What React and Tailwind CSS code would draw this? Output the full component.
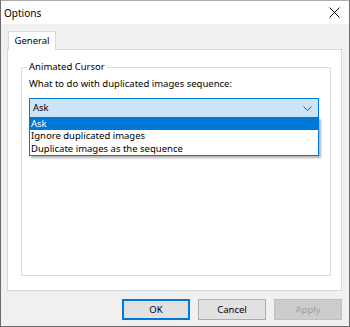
import React from "react";

export default function App() {
  const font = { fontFamily: '"Noto Sans", "Segoe UI", sans-serif' };
  return (
    <div
      className="w-[350px] h-[327px] bg-[#f0f0f0] border-x border-b border-[#6b6b6b] border-t border-t-[#aaaaaa] flex flex-col text-[9.5px] text-black overflow-hidden"
      style={font}
    >
      {/* Title bar */}
      <div className="h-[23px] bg-white flex items-center justify-between shrink-0">
        <span className="pl-[3px] leading-none text-[10px]">Options</span>
        <svg width="11" height="11" viewBox="0 0 11 11" className="mr-[9px]">
          <path d="M0.5 0.5 L10.5 10.5 M10.5 0.5 L0.5 10.5" stroke="#111" strokeWidth="1" />
        </svg>
      </div>

      {/* Body */}
      <div className="flex-1 flex flex-col pl-[6px] pr-[7px] pt-[7px]">
        {/* Tab strip */}
        <div className="flex pl-[1px] h-[19px] relative z-10">
          <div className="w-[48px] h-[19px] bg-white border-x border-t border-[#d9d9d9] flex items-center justify-center leading-none">
            General
          </div>
        </div>
        {/* Tab panel */}
        <div className="h-[242px] -mt-[1px] bg-white border border-[#d9d9d9] pl-[13px] pr-[10px] pt-[17px] pb-[14px] flex flex-col">
          <div className="relative flex-1 border border-[#dcdcdc] flex flex-col px-[7px]">
            <span className="absolute -top-[8px] left-[5px] bg-white px-[2px] leading-[14px]">
              Animated Cursor
            </span>
            <div className="pt-[9px] leading-[14px]">
              What to do with duplicated images sequence:
            </div>
            <div className="relative mt-[7px] w-[290px]">
              <div className="h-[20px] bg-[#cce4f7] border border-[#0078d7] flex items-center justify-between pl-[3px] pr-[6px]">
                <span className="leading-none">Ask</span>
                <svg width="9" height="5" viewBox="0 0 9 5">
                  <path d="M0.5 0.5 L4.5 4.5 L8.5 0.5" stroke="#555" strokeWidth="1" fill="none" />
                </svg>
              </div>
              <div className="absolute left-0 top-[19px] w-[290px] bg-white border border-[#0078d7] shadow-[2px_2px_2px_rgba(0,0,0,0.3)] flex flex-col">
                <div className="h-[12px] bg-[#0078d7] text-white flex items-center pl-[1px] leading-none">Ask</div>
                <div className="h-[12px] flex items-center pl-[1px] leading-none">Ignore duplicated images</div>
                <div className="h-[13px] flex items-center pl-[1px] leading-none">Duplicate images as the sequence</div>
              </div>
            </div>
          </div>
        </div>

        {/* Buttons */}
        <div className="flex justify-end gap-[8px] pt-[8px] pr-[0px]">
          <button className="w-[68px] h-[21px] bg-[#e1e1e1] border-2 border-[#0078d7] leading-none">OK</button>
          <button className="w-[68px] h-[21px] bg-[#e1e1e1] border border-[#adadad] leading-none">Cancel</button>
          <button className="w-[68px] h-[21px] bg-[#cccccc] border border-[#bfbfbf] text-[#a0a0a0] leading-none">Apply</button>
        </div>
      </div>
    </div>
  );
}
